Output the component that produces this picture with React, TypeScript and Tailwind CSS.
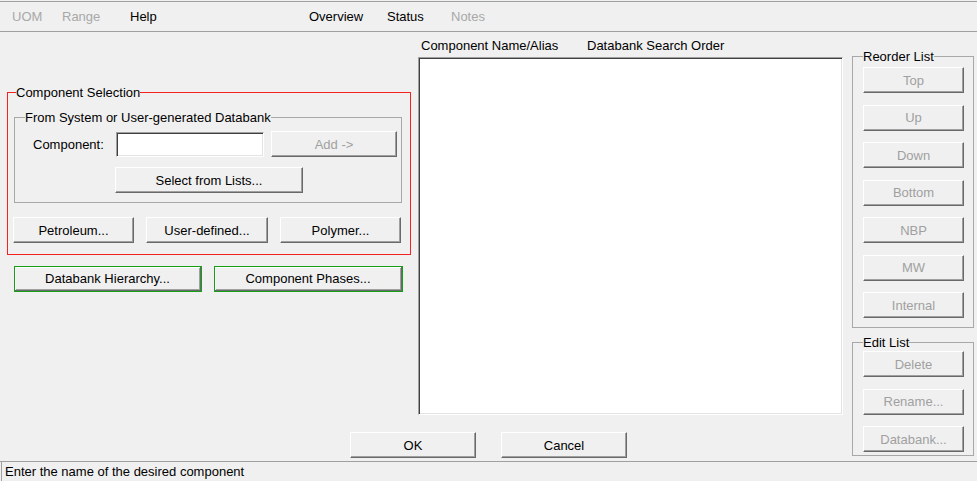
import React from 'react';

type BtnProps = {
  label: string;
  disabled?: boolean;
  className?: string;
};

const Btn: React.FC<BtnProps> = ({ label, disabled, className = '' }) => (
  <button
    type="button"
    className={`flex h-[26px] items-center justify-center bg-[#f0f0f0] border border-t-white border-l-white border-r-[#696969] border-b-[#696969] shadow-[inset_-1px_-1px_0_#a0a0a0] leading-none ${
      disabled ? 'text-[#a0a0a0]' : 'text-black'
    } ${className}`}
  >
    {label}
  </button>
);

const GreenBtn: React.FC<{ label: string; className?: string }> = ({ label, className = '' }) => (
  <div className={`h-[26px] border border-[#14a014] ${className}`}>
    <button
      type="button"
      className="flex h-full w-full items-center justify-center bg-[#f0f0f0] border-r border-b border-[#696969] shadow-[inset_1px_1px_0_#ffffff,inset_-1px_-1px_0_#a0a0a0] leading-none"
    >
      {label}
    </button>
  </div>
);

const menu = [
  { label: 'UOM', w: 'w-[50px]', disabled: true },
  { label: 'Range', w: 'w-[68px]', disabled: true },
  { label: 'Help', w: 'w-[179px]', disabled: false },
  { label: 'Overview', w: 'w-[78px]', disabled: false },
  { label: 'Status', w: 'w-[64px]', disabled: false },
  { label: 'Notes', w: 'w-[60px]', disabled: true },
];

const reorder = ['Top', 'Up', 'Down', 'Bottom', 'NBP', 'MW', 'Internal'];
const editList = ['Delete', 'Rename...', 'Databank...'];

export default function App() {
  return (
    <div className="flex h-[481px] w-[977px] flex-col overflow-hidden bg-[#f0f0f0] font-['Liberation_Sans',Arial,sans-serif] text-[13px] leading-[15px] text-black">
      {/* menu strip */}
      <div className="mt-px flex h-[31px] items-center border-t border-b border-[#a0a0a0] pl-[12px]">
        {menu.map((m) => (
          <span key={m.label} className={`${m.w} ${m.disabled ? 'text-[#a8a8a8]' : 'text-black'}`}>
            {m.label}
          </span>
        ))}
      </div>

      {/* body */}
      <div className="flex h-[429px]">
        <div className="flex w-[852px] flex-col">
          <div className="flex">
            {/* left panel */}
            <div className="w-[418px]">
              <fieldset className="ml-[7px] mt-[53px] h-[170px] w-[404px] border border-[#f52222] pl-[6px]">
                <legend className="ml-[2px] leading-[15px]">Component Selection</legend>
                <fieldset className="mt-[10px] h-[93px] w-[388px] border border-[#a8a8a8] pl-[9px]">
                  <legend className="ml-px leading-[15px]">From System or User-generated Databank</legend>
                  <div className="mt-[6px] flex items-center">
                    <span className="ml-[9px] w-[83px]">Component:</span>
                    <div className="h-[25px] w-[148px] border border-[#a0a0a0] border-r-white border-b-white bg-white shadow-[inset_1px_1px_0_#404040,inset_-1px_-1px_0_#e3e3e3]" />
                    <Btn label="Add ->" disabled className="ml-[7px] w-[126px]" />
                  </div>
                  <Btn label="Select from Lists..." className="ml-[91px] mt-[10px] w-[188px]" />
                </fieldset>
                <div className="-ml-px mt-[14px] flex gap-[12px]">
                  <Btn label="Petroleum..." className="w-[121px]" />
                  <Btn label="User-defined..." className="w-[122px]" />
                  <Btn label="Polymer..." className="w-[121px]" />
                </div>
              </fieldset>
              <div className="ml-[14px] mt-[11px] flex gap-[12px]">
                <GreenBtn label="Databank Hierarchy..." className="w-[188px]" />
                <GreenBtn label="Component Phases..." className="w-[189px]" />
              </div>
            </div>

            {/* list panel */}
            <div className="w-[425px] pt-[6px]">
              <div className="flex h-[19px] pl-[3px]">
                <span className="w-[166px]">Component Name/Alias</span>
                <span>Databank Search Order</span>
              </div>
              <div className="h-[358px] w-[425px] border border-[#a0a0a0] border-r-white border-b-white bg-white shadow-[inset_1px_1px_0_#404040,inset_-1px_-1px_0_#e3e3e3]" />
            </div>
          </div>

          <div className="mt-[17px] flex gap-[25px] pl-[350px]">
            <Btn label="OK" className="w-[126px]" />
            <Btn label="Cancel" className="w-[126px]" />
          </div>
        </div>

        {/* right column */}
        <div className="flex w-[122px] flex-col">
          <fieldset className="mt-[17px] h-[279px] w-[122px] border border-[#a8a8a8] pl-[10px]">
            <legend className="leading-[15px]">Reorder List</legend>
            <div className="flex flex-col gap-[11.5px] pt-[3px]">
              {reorder.map((r) => (
                <Btn key={r} label={r} disabled className="w-[101px]" />
              ))}
            </div>
          </fieldset>
          <fieldset className="mt-[7px] h-[121px] w-[122px] border border-[#a8a8a8] pl-[10px]">
            <legend className="leading-[15px]">Edit List</legend>
            <div className="flex flex-col gap-[11.5px] pt-px">
              {editList.map((r) => (
                <Btn key={r} label={r} disabled className="w-[101px]" />
              ))}
            </div>
          </fieldset>
        </div>
      </div>

      {/* status bar */}
      <div className="flex h-[20px] items-center border-t border-[#a0a0a0]">
        <div className="ml-px flex h-full flex-1 items-center border-l border-[#a0a0a0] pl-[3px]">
          Enter the name of the desired component
        </div>
      </div>
    </div>
  );
}
